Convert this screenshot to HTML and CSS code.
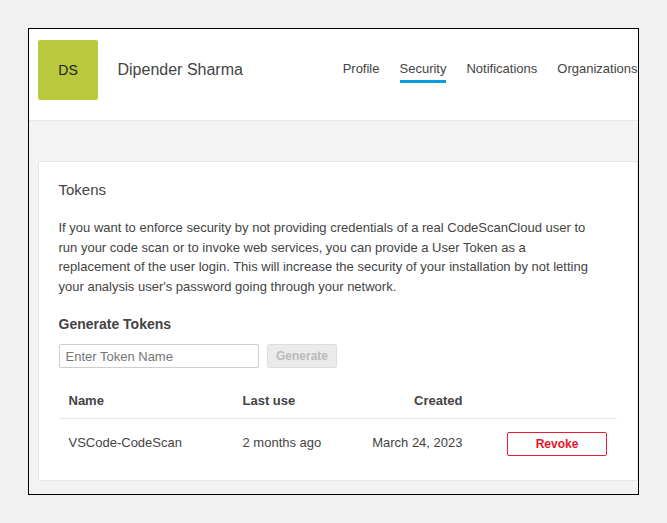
FILE: index.html
```html
<!DOCTYPE html>
<html lang="en">
<head>
<meta charset="utf-8">
<title>Security</title>
<link rel="stylesheet" href="styles.css">
</head>
<body>
<div class="frame">
  <header class="header">
    <div class="avatar">DS</div>
    <h1 class="user-name">Dipender Sharma</h1>
    <nav class="tabs">
      <a class="tab">Profile</a>
      <a class="tab active">Security</a>
      <a class="tab">Notifications</a>
      <a class="tab">Organizations</a>
    </nav>
  </header>
  <main class="card">
    <h2 class="title">Tokens</h2>
    <p class="description">If you want to enforce security by not providing credentials of a real CodeScanCloud user to<br>run your code scan or to invoke web services, you can provide a User Token as a<br>replacement of the user login. This will increase the security of your installation by not letting<br>your analysis user's password going through your network.</p>
    <h3 class="subtitle">Generate Tokens</h3>
    <form class="form">
      <input class="input" type="text" placeholder="Enter Token Name">
      <button class="button generate" type="button" disabled>Generate</button>
    </form>
    <table class="tokens">
      <thead>
        <tr><th class="name">Name</th><th class="used">Last use</th><th class="created">Created</th><th class="action"></th></tr>
      </thead>
      <tbody>
        <tr><td>VSCode-CodeScan</td><td>2 months ago</td><td class="created">March 24, 2023</td><td class="action"><button class="button revoke" type="button">Revoke</button></td></tr>
      </tbody>
    </table>
  </main>
</div>
</body>
</html>
```
FILE: styles.css
```css
* { box-sizing: border-box; }
body {
  margin: 0;
  padding: 28px;
  height: 523px;
  overflow: hidden;
  background: #f1f1f1;
  color: #444;
  font: 13px/19.5px "Liberation Sans", Arial, sans-serif;
}
h1, h2, h3, p { margin: 0; font-weight: 400; }
.frame {
  width: 611px;
  height: 467px;
  border: 1px solid #000;
  background: #f3f3f3;
}
.header {
  display: flex;
  height: 92px;
  padding: 11px 0 0 9px;
  background: #fff;
  border-bottom: 1px solid #e6e6e6;
}
.avatar {
  width: 60px;
  height: 60px;
  border-radius: 2px;
  background: #b9c83c;
  color: #222;
  font-size: 14px;
  line-height: 61px;
  text-align: center;
}
.user-name {
  margin-left: 19.5px;
  font-size: 16px;
  line-height: 60px;
}
.tabs {
  display: flex;
  gap: 20px;
  margin-left: auto;
  padding: 19px 0.5px 0 0;
}
.tab {
  height: 24px;
  border-bottom: 3px solid transparent;
}
.active { border-color: #009fd9; }
.card {
  width: 600px;
  height: 320px;
  margin: 40px 0 0 9px;
  padding: 18px 20px 0;
  background: #fff;
  border: 1px solid #e6e6e6;
  border-radius: 2px;
}
.title { margin-left: -0.5px; font-size: 15px; line-height: 20px; }
.description { margin: 18px 0 0 -0.5px; }
.subtitle {
  margin: 18px 0 0 -0.5px;
  font-size: 14px;
  line-height: 20px;
  font-weight: 700;
}
.form {
  display: flex;
  gap: 8px;
  margin: 10px 0 0;
}
.input {
  width: 200px;
  height: 24px;
  padding: 0 5.5px;
  border: 1px solid #cdcdcd;
  border-radius: 2px;
  font: inherit;
}
.input::placeholder { color: #757575; opacity: 1; }
.button {
  height: 24px;
  padding: 0;
  border: 1px solid;
  border-radius: 2px;
  font: 700 12px/22px "Liberation Sans", Arial, sans-serif;
}
.generate {
  width: 70px;
  border-color: #ddd;
  background: #ebebeb;
  color: #bbb;
}
.revoke {
  display: block;
  width: 100px;
  border-color: #ed1c32;
  background: #fff;
  color: #e8132c;
}
.tokens {
  width: 558px;
  margin-top: 14px;
  border-collapse: separate;
  border-spacing: 0;
  table-layout: fixed;
}
.tokens th {
  height: 37px;
  padding: 2px 10.5px 0 9.5px;
  border-bottom: 1px solid #e6e6e6;
  text-align: left;
}
.tokens td { height: 49px; padding: 0 10.5px 2px 9.5px; }
.tokens .name { width: 174px; }
.tokens .used { width: 110px; }
.tokens .created { width: 130px; text-align: right; }
.tokens .action { padding: 0 10px 0 34px; }
```
